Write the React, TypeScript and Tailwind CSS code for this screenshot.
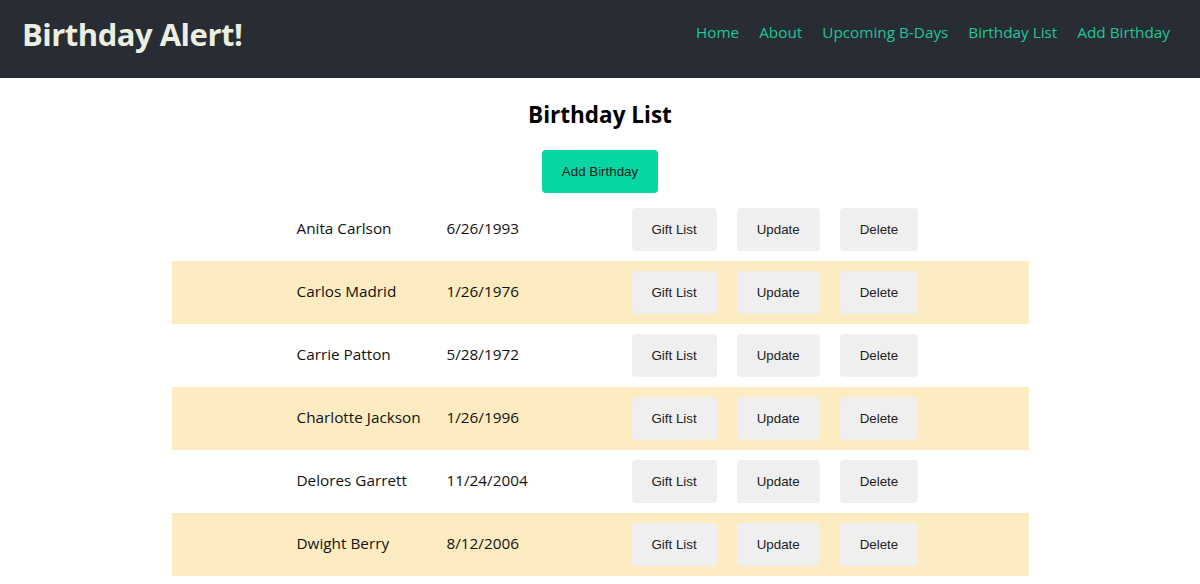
import React from "react";

const people = [
  ["Anita Carlson", "6/26/1993"],
  ["Carlos Madrid", "1/26/1976"],
  ["Carrie Patton", "5/28/1972"],
  ["Charlotte Jackson", "1/26/1996"],
  ["Delores Garrett", "11/24/2004"],
  ["Dwight Berry", "8/12/2006"],
];

const seg = { fontFamily: '"Open Sans", "Noto Sans", sans-serif' };
const btnFont = { fontFamily: '"Liberation Sans", Arial, sans-serif' };

export default function App() {
  return (
    <div className="min-h-screen bg-white" style={seg}>
      <header className="h-[78px] bg-[#282c34] flex items-center justify-between pl-[22px] pr-[30px]">
        <h1 className="-mt-[10px] text-[31px] font-bold text-[#eaefe0] tracking-[-0.5px]">Birthday Alert!</h1>
        <nav className="flex gap-5 text-[15.3px] text-[#1ec795] -mt-[14px]">
          <a>Home</a>
          <a>About</a>
          <a>Upcoming B-Days</a>
          <a>Birthday List</a>
          <a>Add Birthday</a>
        </nav>
      </header>
      <main className="flex flex-col items-center">
        <h2 className="pt-[21px] text-[22.5px] font-bold text-black leading-[32px]">Birthday List</h2>
        <button
          className="mt-[19px] h-[43px] px-5 rounded bg-[#06d6a0] text-[13.33px] text-[#222]"
          style={btnFont}
        >
          Add Birthday
        </button>
        <div className="mt-[5px] w-[857px]">
          {people.map(([name, date], i) => (
            <div
              key={name}
              className={`h-[63px] flex items-center pl-[125px] text-[15.3px] text-[#111] ${i % 2 === 1 ? "bg-[#fdecc1]" : "bg-white"}`}
            >
              <div className="w-[150px] -mt-[2px]">{name}</div>
              <div className="w-[185px] -mt-[2px]">{date}</div>
              <div className="flex gap-5" style={btnFont}>
                <button className="h-[43px] px-5 rounded bg-[#efefef] text-[13.33px] text-[#222]">Gift List</button>
                <button className="h-[43px] px-5 rounded bg-[#efefef] text-[13.33px] text-[#222]">Update</button>
                <button className="h-[43px] px-5 rounded bg-[#efefef] text-[13.33px] text-[#222]">Delete</button>
              </div>
            </div>
          ))}
        </div>
      </main>
    </div>
  );
}
